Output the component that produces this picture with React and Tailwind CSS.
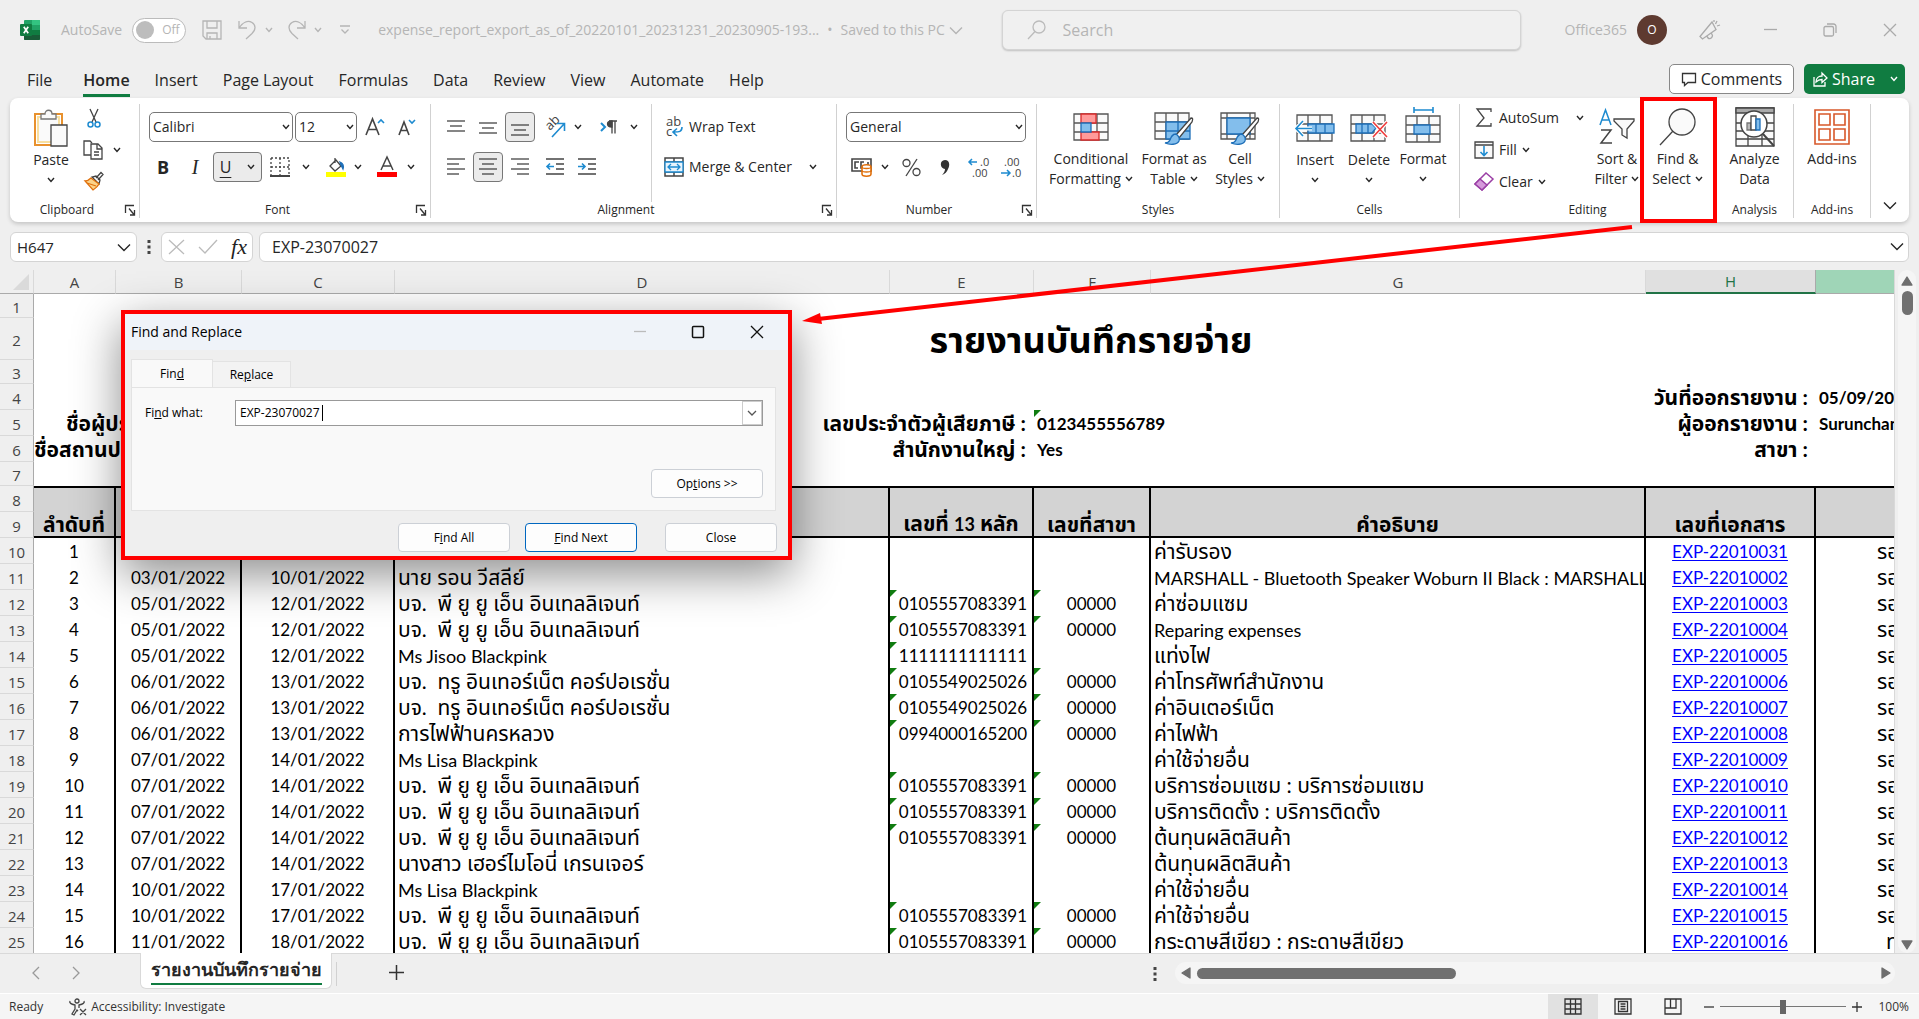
import React, { useState } from "react";

const UI = "font-['Open_Sans','Noto_Sans',sans-serif]";

const TABS = ["File", "Home", "Insert", "Page Layout", "Formulas", "Data", "Review", "View", "Automate", "Help"];

const PUN = "บจ.  พี ยู ยู เอ็น อินเทลลิเจนท์";
const TRUE_CORP = "บจ.  ทรู อินเทอร์เน็ต คอร์ปอเรชั่น";

const ROWS = [
  ["01/01/2022", "08/01/2022", "", "", "", "ค่ารับรอง", "EXP-22010031"],
  ["03/01/2022", "10/01/2022", "นาย รอน วีสลีย์", "", "", "MARSHALL - Bluetooth Speaker Woburn II Black : MARSHALL", "EXP-22010002"],
  ["05/01/2022", "12/01/2022", PUN, "0105557083391", "00000", "ค่าซ่อมแซม", "EXP-22010003"],
  ["05/01/2022", "12/01/2022", PUN, "0105557083391", "00000", "Reparing expenses", "EXP-22010004"],
  ["05/01/2022", "12/01/2022", "Ms Jisoo Blackpink", "1111111111111", "", "แท่งไฟ", "EXP-22010005"],
  ["06/01/2022", "13/01/2022", TRUE_CORP, "0105549025026", "00000", "ค่าโทรศัพท์สำนักงาน", "EXP-22010006"],
  ["06/01/2022", "13/01/2022", TRUE_CORP, "0105549025026", "00000", "ค่าอินเตอร์เน็ต", "EXP-22010007"],
  ["06/01/2022", "13/01/2022", "การไฟฟ้านครหลวง", "0994000165200", "00000", "ค่าไฟฟ้า", "EXP-22010008"],
  ["07/01/2022", "14/01/2022", "Ms Lisa Blackpink", "", "", "ค่าใช้จ่ายอื่น", "EXP-22010009"],
  ["07/01/2022", "14/01/2022", PUN, "0105557083391", "00000", "บริการซ่อมแซม : บริการซ่อมแซม", "EXP-22010010"],
  ["07/01/2022", "14/01/2022", PUN, "0105557083391", "00000", "บริการติดตั้ง : บริการติดตั้ง", "EXP-22010011"],
  ["07/01/2022", "14/01/2022", PUN, "0105557083391", "00000", "ต้นทุนผลิตสินค้า", "EXP-22010012"],
  ["07/01/2022", "14/01/2022", "นางสาว เฮอร์ไมโอนี่ เกรนเจอร์", "", "", "ต้นทุนผลิตสินค้า", "EXP-22010013"],
  ["10/01/2022", "17/01/2022", "Ms Lisa Blackpink", "", "", "ค่าใช้จ่ายอื่น", "EXP-22010014"],
  ["10/01/2022", "17/01/2022", PUN, "0105557083391", "00000", "ค่าใช้จ่ายอื่น", "EXP-22010015"],
  ["11/01/2022", "18/01/2022", PUN, "0105557083391", "00000", "กระดาษสีเขียว : กระดาษสีเขียว", "EXP-22010016"],
];

const Svg = ({ w, h, children, className = "" }) => (
  <svg
    width={w}
    height={h}
    viewBox={`0 0 ${w} ${h}`}
    fill="none"
    stroke="#444"
    strokeWidth="1.3"
    aria-hidden="true"
    className={`shrink-0 overflow-visible ${className}`}
  >
    {children}
  </svg>
);

const Chevron = ({ className = "", big = false }) =>
  big ? (
    <Svg w={14} h={9} className={className}>
      <path d="M1 1.5 7 7.5 13 1.5" stroke="currentColor" strokeWidth="1.4" />
    </Svg>
  ) : (
    <Svg w={8} h={6} className={className}>
      <path d="M1 1 4 4.4 7 1" stroke="currentColor" strokeWidth="1.4" />
    </Svg>
  );

const Group = ({ label, launcher, className = "", children }) => (
  <section className={`flex flex-col border-r border-[#d1d1d1] ${className}`} aria-label={label}>
    <div className="flex h-24 flex-1">{children}</div>
    <footer className="flex h-4 items-center text-xs leading-4">
      <span className="flex-1 text-center">{label}</span>
      {launcher && (
        <button aria-label={`${label} settings`} className="mr-[3px]">
          <Svg w={12} h={12}>
            <path d="M1.5 9V1.5H10M5 4.5l5 6M10.5 6v5H6" stroke="#333" />
          </Svg>
        </button>
      )}
    </footer>
  </section>
);

const Tool = ({ label, className = "w-7", active, children }) => (
  <button
    aria-label={label}
    className={`flex h-[30px] shrink-0 items-center justify-center rounded ${
      active ? "border border-[#777] bg-[#ebebeb]" : ""
    } ${className}`}
  >
    {children}
  </button>
);

const Rule = () => <span className="h-[30px] w-px shrink-0 bg-[#d1d1d1]" />;

// Tall ribbon button: drawing on top, one or two lines of caption below
const BigTool = ({ icon, lines, arrow, className = "" }) => (
  <button className={`flex shrink-0 flex-col items-center text-sm leading-5 ${className}`}>
    <span className="flex h-[45px] items-center justify-center">{icon}</span>
    <span>{lines[0]}</span>
    <span className="flex h-5 items-center justify-center gap-1">
      {lines[1]}
      {arrow && <Chevron />}
    </span>
  </button>
);

const Picker = ({ label, value, className }) => (
  <div className={`relative shrink-0 ${className}`}>
    <select
      aria-label={label}
      className="h-[30px] w-full appearance-none rounded-[5px] border border-[#777] bg-white pl-[3px] text-sm"
    >
      <option>{value}</option>
    </select>
    <Chevron className="pointer-events-none absolute right-[3px] top-3" />
  </div>
);

const Lines = ({ ys, xs }) => (
  <Svg w={18} h={18}>
    {ys.map((y, i) => (
      <path key={y} d={`M${xs[i][0]} ${y}H${xs[i][1]}`} />
    ))}
  </Svg>
);

const TitleBar = () => (
  <header className="flex h-[60px] shrink-0 items-center pl-5 text-sm text-[#b5b5b5]">
    <Svg w={20} h={20}>
      <g stroke="none">
        <rect x="4" width="16" height="20" rx="1" fill="#21a366" />
        <path d="M12 0h7a1 1 0 0 1 1 1v4h-8z" fill="#33c481" />
        <path d="M4 5h8v5H4z" fill="#107c41" />
        <path d="M12 10h8v5h-8zM4 10h8v5H4z" fill="#185c37" />
        <path d="M12 10h8v5h-8z" fill="#107c41" />
        <path d="M4 15h16v4a1 1 0 0 1-1 1H5a1 1 0 0 1-1-1z" fill="#185c37" />
        <rect y="4" width="12" height="12" rx="1" fill="#107c41" />
      </g>
      <path d="M3.8 6.8 8.2 13.2M8.2 6.8 3.8 13.2" stroke="#fff" strokeWidth="1.7" />
    </Svg>
    <span className="ml-[21px]">AutoSave</span>
    <button
      role="switch"
      aria-checked="false"
      aria-label="AutoSave"
      className="ml-[10px] flex h-[25px] w-[54px] items-center gap-2 rounded-full border border-[#bbb] bg-white pl-[3px] text-xs"
    >
      <span className="size-[18px] rounded-full bg-[#bdbdbd]" />
      Off
    </button>
    <button aria-label="Save" className="ml-4">
      <Svg w={20} h={20}>
        <path d="M1 1h18v18H4l-3-3zM5 1v7h10V1M5 19v-6h10v6M8 19v-3" stroke="#b5b5b5" />
      </Svg>
    </button>
    <button aria-label="Undo" className="ml-4 flex items-center gap-2">
      <Svg w={19} h={20}>
        <path d="M1 1v7h8M1 8C5 2 10 0 14 2.500s4 7 0 11L8 19" stroke="#b5b5b5" />
      </Svg>
      <Chevron />
    </button>
    <button aria-label="Redo" className="ml-[14px] flex items-center gap-2">
      <Svg w={19} h={20}>
        <path d="M18 1v7h-8M18 8C14 2 9 0 5 2.500s-4 7 0 11L11 19" stroke="#b5b5b5" />
      </Svg>
      <Chevron />
    </button>
    <button aria-label="Customize toolbar" className="ml-[18px]">
      <Svg w={10} h={10}>
        <path d="M0 1h10M1.500 4.500 5 8 8.500 4.500" stroke="#b5b5b5" />
      </Svg>
    </button>
    <span className="ml-[28px]">expense_report_export_as_of_20220101_20231231_20230905-193...</span>
    <span className="ml-2">•</span>
    <button className="ml-2 flex items-center gap-1">
      Saved to this PC
      <Chevron big />
    </button>
    <label className="ml-auto flex h-10 w-[519px] items-center gap-4 rounded-md border border-[#d4d4d4] bg-[#f0f0f0] pl-6 shadow-[0_1px_2px_rgba(0,0,0,0.2)]">
      <Svg w={20} h={20}>
        <circle cx="12" cy="7" r="6" stroke="#bbb" />
        <path d="M8 11.500 1 19" stroke="#bbb" />
      </Svg>
      <input aria-label="Search" placeholder="Search" className="w-80 text-base outline-none placeholder:text-[#b5b5b5]" />
    </label>
    <span className="ml-11">Office365</span>
    <span className="ml-[10px] flex size-[30px] items-center justify-center rounded-full bg-[#5e3a30] text-xs text-white">O</span>
    <button aria-label="Coming soon" className="ml-8">
      <Svg w={22} h={22}>
        <path d="M13 3 1 17.500l2.500 2.500 13.500-9.500zM8 17c1 4 5 3 5.500-.500l-1-2M15 1v2M18 2l-1.500 3M21 6l-3 1" stroke="#aaa" />
      </Svg>
    </button>
    <button aria-label="Minimize" className="ml-[43px]">
      <Svg w={14} h={14}>
        <path d="M0 6.500h13" stroke="#aaa" />
      </Svg>
    </button>
    <button aria-label="Restore" className="ml-[45px]">
      <Svg w={14} h={14}>
        <rect x="1" y="3.500" width="9.500" height="9.500" rx="1.500" stroke="#aaa" />
        <path d="M4 1h6.500a2.500 2.500 0 0 1 2.500 2.500V10" stroke="#aaa" />
      </Svg>
    </button>
    <button aria-label="Close window" className="ml-[46px] mr-[22px]">
      <Svg w={14} h={14}>
        <path d="m1 1 12 12M13 1 1 13" stroke="#aaa" />
      </Svg>
    </button>
  </header>
);

const MenuBar = () => (
  <nav className="flex h-[38px] shrink-0 items-center gap-[25px] pl-[27px] pr-[14px] text-base">
    {TABS.map((tab) =>
      tab === "Home" ? (
        <a key={tab} href="#home" className="ml-[6px] mt-1 border-b-[3px] border-[#107c41] font-semibold leading-7">
          {tab}
        </a>
      ) : (
        <a key={tab} href={`#${tab.toLowerCase().replace(" ", "-")}`} className="mt-px leading-7">
          {tab}
        </a>
      )
    )}
    <div className="ml-auto flex gap-[10px]">
      <button className="flex h-[30px] w-[125px] items-center justify-center gap-1 rounded-[5px] border border-[#888] bg-white">
        <Svg w={16} h={15}>
          <path d="M1.500 1.500h13v9H7l-3.500 3v-3h-2z" stroke="#333" />
        </Svg>
        Comments
      </button>
      <button className="flex h-[30px] w-[101px] items-center rounded-[5px] bg-[#107c41] pl-2 text-white">
        <Svg w={16} h={16}>
          <path d="M2 6v9h11v-4M4 11c0-4 3-6 6-6V2l5 5-5 4.500V8.500C8 8.500 6 9 4 11z" stroke="#fff" />
        </Svg>
        <span className="ml-1 font-medium">Share</span>
        <Chevron className="ml-auto mr-[7px]" />
      </button>
    </div>
  </nav>
);

const GridBase = ({ x = 1, y = 1, w = 34, h = 26 }) => (
  <path
    d={`M${x} ${y}h${w}v${h}h-${w}zM${x} ${y + 9}h${w}M${x} ${y + 18}h${w}M${x + 11} ${y}v${h}M${x + 23} ${y}v${h}`}
    fill="#fafafa"
    stroke="#555"
  />
);

const Brush = () => (
  <g>
    <path d="M37 9 22 26l3 3L38 13c1-3 1-4-1-4z" fill="#fff" stroke="#444" />
    <path d="M22 25c-4 0-5 3-6 6-1 2-3 3-5 3 5 2 12 2 14-2 1-3 0-5-3-7z" fill="#83beec" stroke="#1e6fb8" />
  </g>
);

const Ribbon = () => (
  <div className="mx-[10px] flex h-[124px] shrink-0 rounded-lg bg-white pb-1 pt-[6px] text-sm shadow-[0_2px_4px_rgba(0,0,0,0.18)]">
    <Group label="Clipboard" launcher className="w-[130px]">
      <BigTool
        className="ml-5 w-[42px] pt-px"
        lines={["Paste"]}
        arrow
        icon={
          <Svg w={36} h={40}>
            <path d="M2 6h27v31H2z" fill="#fff" stroke="#e8912d" strokeWidth="2" />
            <path d="M5 9h21v25H5z" fill="#fafafa" stroke="#f8dfa0" strokeWidth="2" />
            <path d="M8 11V6h4c0-5 7-5 7 0h4v5z" fill="#fafafa" stroke="#777" />
            <path d="M18 17h16v21H18z" fill="#fafafa" stroke="#444" />
          </Svg>
        }
      />
      <div className="ml-3 flex flex-col gap-px">
        <Tool label="Cut" className="w-5">
          <Svg w={14} h={20}>
            <path d="M3 0l6 13M11 0 5 13" />
            <circle cx="3.500" cy="15.500" r="2.500" stroke="#1e8bd0" strokeWidth="1.500" />
            <circle cx="10.500" cy="15.500" r="2.500" stroke="#1e8bd0" strokeWidth="1.500" />
          </Svg>
        </Tool>
        <Tool label="Copy" className="gap-[10px] pl-2 w-7">
          <Svg w={20} h={20}>
            <path d="M8 15H1V1h6l2 2" />
            <path d="M8 4h7l4 4v11H8zM14 4v5h5M11 12h5M11 15h5" fill="#fff" />
          </Svg>
          <Chevron />
        </Tool>
        <Tool label="Format Painter" className="w-5">
          <Svg w={20} h={20}>
            <path d="M12 7l5-5.500 2 2L14 9M8 6l7 7 1-4-4-4z" fill="#fff" />
            <path d="M7 7C5 9 3 10 1 10l8 9c3-2 5-4 6-6z" fill="#fbd38a" stroke="#e0700c" />
            <path d="M3 12l9 3" stroke="#e0700c" />
          </Svg>
        </Tool>
      </div>
    </Group>

    <Group label="Font" launcher className="w-[291px]">
      <div className="flex flex-col gap-[10px] pl-[9px] pt-2">
        <div className="flex items-center">
          <Picker label="Font name" value="Calibri" className="w-[144px]" />
          <Picker label="Font size" value="12" className="ml-[2px] w-[62px]" />
          <Tool label="Increase font size" className="ml-[6px] w-6">
            <Svg w={20} h={20}>
              <path d="M1 18 7.500 2 14 18M3 12.500h9" strokeWidth="1.600" />
              <path d="m13 6 3-3 3 3" stroke="#1e8bd0" strokeWidth="1.600" />
            </Svg>
          </Tool>
          <Tool label="Decrease font size" className="ml-2 w-6">
            <Svg w={18} h={20}>
              <path d="M1 18 6 5l5 13M3 13.500h7" strokeWidth="1.600" />
              <path d="m11 3 3 3 3-3" stroke="#1e8bd0" strokeWidth="1.600" />
            </Svg>
          </Tool>
        </div>
        <div className="flex items-center">
          <Tool label="Bold">
            <b className="text-lg">B</b>
          </Tool>
          <Tool label="Italic" className="ml-1 w-7">
            <i className="font-['Liberation_Serif',serif] text-xl">I</i>
          </Tool>
          <Tool label="Underline" active className="ml-1 w-[49px] gap-4">
            <span className="text-base underline underline-offset-4">U</span>
            <Chevron />
          </Tool>
          <span className="ml-[2px]">
            <Rule />
          </span>
          <Tool label="Borders" className="ml-[6px] w-10 gap-3">
            <Svg w={20} h={20}>
              <path d="M1 1h18v18M1 1v18M10 1v18M1 10h18" strokeDasharray="2 2" />
              <path d="M0 19h20" strokeWidth="2" />
            </Svg>
            <Chevron />
          </Tool>
          <span className="ml-[7px]">
            <Rule />
          </span>
          <Tool label="Fill Color" className="ml-[7px] w-10 gap-2">
            <Svg w={20} h={20}>
              <path d="M9 1v5M4 9l6-6 5 6-6 5z" />
              <path d="M14 5c3 1 4 4 3 7l-2-4z" fill="#1e6fb8" stroke="#1e6fb8" />
              <path d="M0 17.500h20" stroke="#ffff00" strokeWidth="5" />
            </Svg>
            <Chevron />
          </Tool>
          <Tool label="Font Color" className="ml-3 w-10 gap-[10px]">
            <Svg w={20} h={20}>
              <path d="M4 13 10 0l6 13M6 9h8" strokeWidth="1.500" />
              <path d="M0 17.500h20" stroke="#ff0000" strokeWidth="5" />
            </Svg>
            <Chevron />
          </Tool>
        </div>
      </div>
    </Group>

    <Group label="Alignment" launcher className="w-[406px]">
      <div className="flex flex-col gap-[10px] pl-[11px] pt-2">
        <div className="flex items-center">
          <Tool label="Top Align">
            <Lines ys={[3, 8, 13]} xs={[[0, 18], [3, 15], [0, 18]]} />
          </Tool>
          <Tool label="Middle Align" className="ml-1 w-7">
            <Lines ys={[5, 10, 15]} xs={[[0, 18], [3, 15], [0, 18]]} />
          </Tool>
          <Tool label="Bottom Align" active className="ml-[3px] w-[30px]">
            <Lines ys={[7, 12, 17]} xs={[[0, 18], [3, 15], [0, 18]]} />
          </Tool>
          <span className="ml-[2px]">
            <Rule />
          </span>
          <Tool label="Orientation" className="ml-1 w-11 gap-2">
            <Svg w={22} h={22}>
              <text transform="translate(6 15) rotate(-45)" fontSize="13" fill="#444" stroke="none">
                ab
              </text>
              <path d="M8 21 20 8M13 7.500h7.500V15" stroke="#1e8bd0" strokeWidth="1.600" />
            </Svg>
            <Chevron />
          </Tool>
          <span className="ml-[6px]">
            <Rule />
          </span>
          <Tool label="Text direction" className="ml-2 w-10 gap-3">
            <Svg w={18} h={16}>
              <path d="m1 4 4 4-4 4" stroke="#1e8bd0" strokeWidth="2" />
              <path d="M12 2.500v12M15 2.500v12M9 2h8" />
              <path d="M12 2c-6 0-6 6 0 6z" fill="#444" />
            </Svg>
            <Chevron />
          </Tool>
        </div>
        <div className="flex items-center">
          <Tool label="Align Left">
            <Lines ys={[1, 6, 11, 16]} xs={[[0, 18], [0, 12], [0, 18], [0, 12]]} />
          </Tool>
          <Tool label="Center" active className="ml-[3px] w-[30px]">
            <Lines ys={[1, 6, 11, 16]} xs={[[0, 18], [3, 15], [0, 18], [3, 15]]} />
          </Tool>
          <Tool label="Align Right" className="ml-[3px] w-7">
            <Lines ys={[1, 6, 11, 16]} xs={[[0, 18], [6, 18], [0, 18], [6, 18]]} />
          </Tool>
          <span className="ml-[3px]">
            <Rule />
          </span>
          <Tool label="Decrease Indent" className="ml-1 w-7">
            <Svg w={18} h={18}>
              <path d="M0 1h18M10 6h8M10 11h8M0 16h18" />
              <path d="M8 8.500H1M4 5.500l-3 3 3 3" stroke="#1e8bd0" strokeWidth="1.600" />
            </Svg>
          </Tool>
          <Tool label="Increase Indent" className="ml-1 w-7">
            <Svg w={18} h={18}>
              <path d="M0 1h18M10 6h8M10 11h8M0 16h18" />
              <path d="M0 8.500h7M4 5.500l3 3-3 3" stroke="#1e8bd0" strokeWidth="1.600" />
            </Svg>
          </Tool>
        </div>
      </div>
      <div className="ml-auto flex w-[185px] flex-col gap-[10px] border-l border-[#d1d1d1] pl-3 pt-2">
        <button className="flex h-[30px] items-center gap-[5px]">
          <Svg w={20} h={22}>
            <g fill="#444" stroke="none" fontSize="13">
              <text x="2" y="10">ab</text>
              <text x="2" y="20">c</text>
            </g>
            <path d="M18 11c0 5-3 5-8 5M13 12.500l-4 3.500 4 4" stroke="#1e8bd0" strokeWidth="1.600" />
          </Svg>
          Wrap Text
        </button>
        <button className="flex h-[30px] items-center gap-[5px]">
          <Svg w={20} h={20}>
            <path d="M1 1h18v18H1zM1 5h18M1 15h18M10 1v4M10 15v4" strokeWidth="1.500" />
            <path d="M1 5h18v10H1z" fill="#e9f4fc" stroke="#1e8bd0" />
            <path d="M4 10h12M7 7l-3 3 3 3M13 7l3 3-3 3" stroke="#1e8bd0" />
          </Svg>
          Merge &amp; Center
          <Chevron className="ml-3" />
        </button>
      </div>
    </Group>

    <Group label="Number" launcher className="w-[200px]">
      <div className="flex flex-col gap-[10px] pl-[9px] pt-2">
        <Picker label="Number format" value="General" className="w-[180px]" />
        <div className="flex items-center">
          <Tool label="Accounting Number Format" className="w-12 gap-2">
            <Svg w={22} h={20}>
              <path d="M1 2h19v12H1zM8 5H4v6h3M13 5h-3v6h2M17 5v3" strokeWidth="1.600" />
              <path d="M11 10c0-3 9-3 9 0v7c0 3-9 3-9 0z" fill="#fff" stroke="#e0700c" strokeWidth="1.600" />
              <path d="M11 10c0 2 9 2 9 0M11 13.500c0 2 9 2 9 0" stroke="#e0700c" />
            </Svg>
            <Chevron />
          </Tool>
          <Tool label="Percent Style" className="ml-px w-8">
            <Svg w={19} h={19}>
              <circle cx="4.500" cy="5" r="3.500" />
              <circle cx="14.500" cy="14" r="3.500" />
              <path d="M15 1 4 18" />
            </Svg>
          </Tool>
          <Tool label="Comma Style" className="ml-[6px] w-6">
            <Svg w={10} h={17}>
              <path d="M5 1c5 0 5 6 3 9-1 3-3 5-6 6 2-2 3-4 3-6-5 0-6-9 0-9z" fill="#333" stroke="none" />
            </Svg>
          </Tool>
          <span className="ml-1">
            <Rule />
          </span>
          <Tool label="Increase Decimal" className="ml-1 w-7">
            <Svg w={22} h={22}>
              <g fill="#444" stroke="none" fontSize="11">
                <text x="12" y="10">.0</text>
                <text x="4" y="21">.00</text>
              </g>
              <path d="M9 6H1M4 3 1 6l3 3" stroke="#1e8bd0" strokeWidth="1.500" />
            </Svg>
          </Tool>
          <Tool label="Decrease Decimal" className="ml-1 w-7">
            <Svg w={22} h={22}>
              <g fill="#444" stroke="none" fontSize="11">
                <text x="4" y="10">.00</text>
                <text x="12" y="21">.0</text>
              </g>
              <path d="M1 17h9M7 14l3 3-3 3" stroke="#1e8bd0" strokeWidth="1.500" />
            </Svg>
          </Tool>
        </div>
      </div>
    </Group>

    <Group label="Styles" className="w-[243px]">
      <BigTool
        className="ml-2 w-[92px]"
        lines={["Conditional", "Formatting"]}
        arrow
        icon={
          <Svg w={36} h={28}>
            <GridBase />
            <path d="M8 1h15v9H8zM8 19h18v8H8z" fill="#ff9a9a" stroke="#d92b2b" />
            <path d="M8 10h10v9H8z" fill="#83beec" stroke="#1e6fb8" />
          </Svg>
        }
      />
      <BigTool
        className="w-[74px]"
        lines={["Format as", "Table"]}
        arrow
        icon={
          <Svg w={40} h={36}>
            <GridBase x={1} y={4} />
            <path d="M12 13h24v17H12z" fill="#83beec" stroke="#1e6fb8" />
            <path d="M24 13v17M12 22h24" stroke="#1e6fb8" />
            <Brush />
          </Svg>
        }
      />
      <BigTool
        className="w-[58px]"
        lines={["Cell", "Styles"]}
        arrow
        icon={
          <Svg w={40} h={36}>
            <path d="M1 4h34v26H1zM1 9h34M1 25h34M7 4v26M30 4v26" fill="#fafafa" stroke="#555" />
            <path d="M7 9h23v16H7z" fill="#83beec" stroke="#1e6fb8" />
            <Brush />
          </Svg>
        }
      />
    </Group>

    <Group label="Cells" className="w-[180px]">
      <BigTool
        className="ml-2 w-[54px] pt-px"
        lines={["Insert"]}
        arrow
        icon={
          <Svg w={42} h={30}>
            <GridBase x={3} y={2} w={35} />
            <path d="M14 11h26v9H14zM22 11v9M31 11v9" fill="#83beec" stroke="#1e6fb8" />
            <path d="M18 15.500H2M9 8l-7 7.500L9 23" stroke="#fff" strokeWidth="4" />
            <path d="M18 15.500H2M9 8l-7 7.500L9 23" stroke="#1e8bd0" strokeWidth="1.600" />
          </Svg>
        }
      />
      <BigTool
        className="w-[54px] pt-px"
        lines={["Delete"]}
        arrow
        icon={
          <Svg w={38} h={30}>
            <GridBase x={1} y={2} />
            <path d="M6 11h16l4 4-4 5H6zM12 11v9M18 11v9" fill="#83beec" stroke="#1e6fb8" />
            <path d="m23 9 14 15M37 9 23 24" stroke="#fff" strokeWidth="4" />
            <path d="m23 9 14 15M37 9 23 24" stroke="#f03a3a" strokeWidth="1.600" />
          </Svg>
        }
      />
      <BigTool
        className="w-[54px]"
        lines={["Format"]}
        arrow
        icon={
          <Svg w={36} h={40}>
            <GridBase x={1} y={9} />
            <path d="M9 18h16v9H9z" fill="#83beec" stroke="#1e6fb8" />
            <path d="M9 3h19M9 0v6M28 0v6" stroke="#1e8bd0" strokeWidth="1.600" />
          </Svg>
        }
      />
    </Group>

    <Group label="Editing" className="w-[256px]">
      <div className="flex w-[134px] flex-col gap-1 pl-[14px]">
        <button className="flex h-7 items-center">
          <Svg w={20} h={20}>
            <path d="M17 4V1H3l7 9-7 8h14v-3" />
          </Svg>
          <span className="ml-[5px]">AutoSum</span>
          <Chevron className="ml-auto mr-[10px]" />
        </button>
        <button className="flex h-7 items-center gap-[5px]">
          <Svg w={20} h={18}>
            <path d="M1 1h18v16H1zM1 4h18" fill="#fafafa" />
            <path d="M10 5v9M6.500 11l3.500 3.500 3.500-3.500" stroke="#1e8bd0" strokeWidth="1.600" />
          </Svg>
          Fill
          <Chevron />
        </button>
        <button className="flex h-7 items-center gap-[5px]">
          <Svg w={20} h={20}>
            <path d="M1 12 12 1l7 6L8 18z" fill="#fff" stroke="#9b3fa5" strokeWidth="1.500" />
            <path d="m1 12 5-5 7 6-5 5z" fill="#d59adb" stroke="#9b3fa5" strokeWidth="1.500" />
          </Svg>
          Clear
          <Chevron />
        </button>
      </div>
      <BigTool
        className="w-[46px] whitespace-nowrap"
        lines={["Sort &", "Filter"]}
        arrow
        icon={
          <Svg w={36} h={36}>
            <path d="M1 16 6.500 1 12 16M3 11h7" stroke="#1e8bd0" strokeWidth="1.500" />
            <path d="M2 21h10L2 34h11" strokeWidth="1.500" />
            <path d="M15 10h20v2l-7 8v9l-5-3v-6l-8-8z" fill="#fafafa" />
          </Svg>
        }
      />
      <div className="relative w-[75px]">
        <BigTool
          className="w-full"
          lines={["Find &", "Select"]}
          arrow
          icon={
            <Svg w={38} h={40}>
              <circle cx="23" cy="15" r="13" fill="#fafafa" />
              <path d="M14 24 1 38" />
            </Svg>
          }
        />
        <span className="pointer-events-none absolute -top-[7px] left-0 h-[126px] w-[77px] border-4 border-[#ff0000]" />
      </div>
    </Group>

    <Group label="Analysis" className="w-[78px]">
      <BigTool
        className="w-full"
        lines={["Analyze", "Data"]}
        icon={
          <Svg w={40} h={40}>
            <path d="M1 1h38v38H1zM1 16h38M1 24h38M1 32h38M13 24v15M27 24v15" fill="#fafafa" />
            <path d="M1 1h38v5H1z" fill="#aaa" />
            <circle cx="19" cy="17" r="13" fill="#fff" strokeWidth="1.500" />
            <path d="M12 16h4v7h-4z" fill="#bbb" stroke="#777" />
            <path d="M16 9h5v14h-5z" fill="#fff" />
            <path d="M21 12h4v11h-4z" fill="#83beec" stroke="#1e6fb8" />
            <path d="m28 27 11 12" strokeWidth="2" />
          </Svg>
        }
      />
    </Group>

    <Group label="Add-ins" className="w-[77px]">
      <BigTool
        className="w-full"
        lines={["Add-ins"]}
        icon={
          <Svg w={36} h={36}>
            <path d="M1 1h34v34H1zM5 5h11v11H5zM20 5h11v11H20zM5 20h11v11H5zM20 20h11v11H20z" fill="#fff" stroke="#d8582a" strokeWidth="1.600" />
          </Svg>
        }
      />
    </Group>
    <button aria-label="Collapse ribbon" className="ml-auto mr-3 self-end pb-2">
      <Chevron big />
    </button>
  </div>
);

const FormulaBar = () => (
  <div className="mt-[10px] flex h-[30px] shrink-0 items-center px-[10px]">
    <div className="relative w-[127px]">
      <input
        aria-label="Name box"
        defaultValue="H647"
        className="h-[30px] w-full rounded-md border border-[#d4d4d4] bg-white pl-[6px] text-[15px] outline-none"
      />
      <Chevron big className="absolute right-[6px] top-[11px]" />
    </div>
    <Svg w={4} h={14} className="ml-[10px]">
      <path d="M2 0v14" stroke="#444" strokeWidth="3" strokeDasharray="3 2.500" />
    </Svg>
    <div className="ml-[10px] flex h-[30px] w-[92px] items-center justify-between rounded-md border border-[#d4d4d4] bg-white pl-[6px] pr-[5px]">
      <button aria-label="Cancel">
        <Svg w={17} h={16}>
          <path d="m1 1 15 14M16 1 1 15" stroke="#bbb" />
        </Svg>
      </button>
      <button aria-label="Enter">
        <Svg w={20} h={16}>
          <path d="m1 8 6 6L19 1" stroke="#bbb" />
        </Svg>
      </button>
      <button aria-label="Insert Function" className="font-['Liberation_Serif',serif] text-[22px] italic leading-6 text-[#222]">
        fx
      </button>
    </div>
    <div className="relative ml-[6px] flex-1">
      <input
        aria-label="Formula bar"
        defaultValue="EXP-23070027"
        className="h-[30px] w-full rounded-md border border-[#d4d4d4] bg-white pl-3 text-base outline-none"
      />
      <Chevron big className="absolute right-[5px] top-[10px]" />
    </div>
  </div>
);

const RowNum = ({ n }) => (
  <th
    scope="row"
    className={`border-b border-r border-b-[#d9d9d9] border-r-[#aaa] bg-[#efefef] p-0 pt-[2px] text-center align-middle text-[15px] font-normal leading-5 text-[#444] ${UI}`}
  >
    {n}
  </th>
);

const Flag = () => (
  <span className="absolute left-0 top-0 border-r-[7px] border-t-[7px] border-r-transparent border-t-[#107c10]" />
);

const CELL = "relative overflow-hidden border-r-2 border-black p-0 whitespace-pre";
const NUM = `${CELL} pt-[2px]`;
const HEAD = "border-y-2 border-r-2 border-black bg-[#d3d3d3] p-0 align-bottom text-[21px] font-bold";
const INFO = "relative overflow-hidden p-0 font-bold";
const LABEL = `${INFO} text-[21px]`;
const VALUE = `${INFO} pl-[3px] pt-[2px]`;

// Thai glyphs run smaller than Latin ones at the same size
const textSize = (text) => (/[\u0E00-\u0E7F]/.test(text) ? "text-[21px]" : "pt-[2px] text-[18px]");

const Sheet = () => (
  <div className="flex-1 overflow-hidden bg-white">
    <table className="w-full table-fixed border-separate border-spacing-0 whitespace-nowrap font-['Lato','Noto_Sans_Thai','Noto_Sans',sans-serif] text-[17px] leading-[24px] text-black">
      <colgroup>
        <col className="w-[34px]" />
        <col className="w-[82px]" />
        <col className="w-[126px]" />
        <col className="w-[153px]" />
        <col className="w-[495px]" />
        <col className="w-[144px]" />
        <col className="w-[117px]" />
        <col className="w-[495px]" />
        <col className="w-[170px]" />
        <col />
      </colgroup>
      <thead>
        <tr className={`h-6 bg-[#efefef] text-[15px] text-[#444] ${UI}`}>
          <th className="border-b border-r border-b-[#aaa] border-r-[#d9d9d9] p-0">
            <Svg w={16} h={16} className="ml-auto mr-1">
              <path d="M16 0v16H0z" fill="#dadada" stroke="none" />
            </Svg>
          </th>
          {["A", "B", "C", "D", "E", "F", "G"].map((c) => (
            <th key={c} scope="col" className="border-b border-r border-b-[#aaa] border-r-[#d9d9d9] p-0 font-normal leading-5">
              {c}
            </th>
          ))}
          <th scope="col" className="border-b-2 border-r border-b-[#217346] border-r-[#aaa] bg-[#e0e0e0] p-0 font-normal leading-5 text-[#217346]">
            H
          </th>
          <th className="border-b border-[#aaa] bg-[#9fd5b7] p-0" />
        </tr>
      </thead>
      <tbody>
        <tr className="h-6">
          <RowNum n={1} />
          <td colSpan={9} className="p-0" />
        </tr>
        <tr className="h-[42px]">
          <RowNum n={2} />
          <td colSpan={9} className="p-0 pl-[254px] text-center text-[36px] font-bold leading-10">
            รายงานบันทึกรายจ่าย
          </td>
        </tr>
        <tr className="h-6">
          <RowNum n={3} />
          <td colSpan={9} className="p-0" />
        </tr>
        <tr className="h-[26px]">
          <RowNum n={4} />
          <td colSpan={7} className="p-0" />
          <td className={`${LABEL} pr-2 text-right`}>วันที่ออกรายงาน :</td>
          <td className={VALUE}>05/09/2023</td>
        </tr>
        <tr className="h-[26px]">
          <RowNum n={5} />
          <td colSpan={3} className={`${LABEL} pl-8`}>ชื่อผู้ประกอบการ :</td>
          <td colSpan={2} className={`${LABEL} pr-2 text-right`}>เลขประจำตัวผู้เสียภาษี :</td>
          <td colSpan={2} className={VALUE}>
            <Flag />
            0123455556789
          </td>
          <td className={`${LABEL} pr-2 text-right`}>ผู้ออกรายงาน :</td>
          <td className={VALUE}>Surunchana</td>
        </tr>
        <tr className="h-[26px]">
          <RowNum n={6} />
          <td colSpan={3} className={LABEL}>ชื่อสถานประกอบการ :</td>
          <td colSpan={2} className={`${LABEL} pr-2 text-right`}>สำนักงานใหญ่ :</td>
          <td colSpan={2} className={VALUE}>Yes</td>
          <td className={`${LABEL} pr-2 text-right`}>สาขา :</td>
          <td className={INFO} />
        </tr>
        <tr className="h-6">
          <RowNum n={7} />
          <td colSpan={9} className="p-0" />
        </tr>
        <tr className="h-[26px]">
          <RowNum n={8} />
          <th rowSpan={2} className={HEAD}>ลำดับที่</th>
          <th rowSpan={2} className={HEAD}>วันที่</th>
          <th rowSpan={2} className={HEAD}>วันครบกำหนด</th>
          <th rowSpan={2} className={HEAD}>ชื่อผู้ขาย</th>
          <th rowSpan={2} className={HEAD}>
            เลขที่ <span className="text-[18px]">13</span> หลัก
          </th>
          <th rowSpan={2} className={HEAD}>เลขที่สาขา</th>
          <th rowSpan={2} className={HEAD}>คำอธิบาย</th>
          <th rowSpan={2} className={HEAD}>เลขที่เอกสาร</th>
          <th rowSpan={2} className="border-y-2 border-black bg-[#d3d3d3] p-0" />
        </tr>
        <tr className="h-[26px]">
          <RowNum n={9} />
        </tr>
        {ROWS.map(([issued, due, vendor, taxId, branch, detail, doc], i) => (
          <tr key={doc} className="h-[26px]">
            <RowNum n={i + 10} />
            <td className={`${NUM} text-center`}>{i + 1}</td>
            <td className={`${NUM} text-center`}>{issued}</td>
            <td className={`${NUM} text-center`}>{due}</td>
            <td className={`${CELL} pl-[3px] ${textSize(vendor)}`}>{vendor}</td>
            <td className={`${NUM} pr-[5px] text-right`}>
              {taxId && <Flag />}
              {taxId}
            </td>
            <td className={`${NUM} text-center`}>
              {branch && <Flag />}
              {branch}
            </td>
            <td className={`${CELL} pl-[3px] ${textSize(detail)}`}>{detail}</td>
            <td className={`${NUM} text-center`}>
              <a href={`#${doc}`} className="text-[#0000ff] underline underline-offset-2">
                {doc}
              </a>
            </td>
            <td className={`overflow-hidden p-0 text-[21px] ${i === 15 ? "pl-[70px]" : "pl-[61px]"}`}>
              {i === 15 ? "ท" : "รอ"}
            </td>
          </tr>
        ))}
      </tbody>
    </table>
  </div>
);

const VerticalScroll = () => (
  <div className="flex w-[25px] flex-col items-center border-l border-[#d9d9d9] bg-[#efefef]">
    <div className="flex w-[18px] flex-1 flex-col items-center rounded-full bg-[#f5f5f5] pb-[3px] pt-[6px]">
      <Svg w={12} h={10}>
        <path d="M6 1 11 9H1z" fill="#6e6e6e" stroke="#6e6e6e" strokeLinejoin="round" />
      </Svg>
      <span className="mt-[5px] h-6 w-[11px] rounded-full bg-[#707070]" />
      <Svg w={12} h={10} className="mt-auto">
        <path d="M6 9 11 1H1z" fill="#6e6e6e" stroke="#6e6e6e" strokeLinejoin="round" />
      </Svg>
    </div>
  </div>
);

const SheetTabs = () => (
  <div className="flex h-10 shrink-0 items-start border-t border-[#d9d9d9] bg-[#efefef]">
    <button aria-label="Previous sheet" className="ml-8 mt-3">
      <Svg w={8} h={14}>
        <path d="M7 1 1 7l6 6" stroke="#999" />
      </Svg>
    </button>
    <button aria-label="Next sheet" className="ml-8 mt-3">
      <Svg w={8} h={14}>
        <path d="m1 1 6 6-6 6" stroke="#999" />
      </Svg>
    </button>
    <button className="-mt-px ml-[60px] flex h-9 w-[192px] justify-center rounded-b-md border border-t-0 border-[#d9d9d9] bg-white">
      <span className="h-8 border-b-2 border-[#107c41] text-[18px] font-bold leading-8">รายงานบันทึกรายจ่าย</span>
    </button>
    <span className="ml-1 mt-2 h-6 w-px bg-[#d1d1d1]" />
    <button aria-label="New sheet" className="ml-[52px] mt-[11px]">
      <Svg w={15} h={15}>
        <path d="M7.500 0v15M0 7.500h15" stroke="#333" strokeWidth="1.500" />
      </Svg>
    </button>
    <Svg w={4} h={14} className="ml-auto mt-[13px]">
      <path d="M2 0v14" stroke="#444" strokeWidth="3" strokeDasharray="3 2.500" />
    </Svg>
    <div className="ml-[18px] mr-6 mt-2 flex h-[22px] w-[720px] items-center rounded-full bg-[#f5f5f5] pl-[6px] pr-1">
      <Svg w={10} h={12}>
        <path d="M1 6 9 1v10z" fill="#6e6e6e" stroke="#6e6e6e" strokeLinejoin="round" />
      </Svg>
      <span className="ml-[6px] h-[11px] w-[259px] rounded-full bg-[#707070]" />
      <Svg w={10} h={12} className="ml-auto">
        <path d="M9 6 1 1v10z" fill="#6e6e6e" stroke="#6e6e6e" strokeLinejoin="round" />
      </Svg>
    </div>
  </div>
);

const StatusBar = () => (
  <footer className="flex h-[26px] shrink-0 items-center border-t border-white bg-[#f5f5f5] pl-[9px] pr-[10px] text-xs text-[#333]">
    <span>Ready</span>
    <button className="ml-[26px] flex items-center gap-1">
      <Svg w={18} h={18}>
        <circle cx="8" cy="3" r="2" />
        <path d="M1 3c-1 2 1 3 5 4v4l-3 5 2 1 3-5 1 1M15 3c1 2-1 3-5 4v3M11 11l6 6M17 11l-6 6" />
      </Svg>
      Accessibility: Investigate
    </button>
    <button aria-label="Normal view" className="ml-auto flex h-[25px] w-[50px] items-center justify-center bg-[#e1e1e1]">
      <Svg w={18} h={17}>
        <path d="M1 1h16v15H1zM1 6h16M1 11h16M6.500 1v15M11.500 1v15" stroke="#333" />
      </Svg>
    </button>
    <button aria-label="Page Layout view" className="flex h-[25px] w-[50px] items-center justify-center">
      <Svg w={18} h={17}>
        <path d="M1 1h16v15H1zM4.500 3.500h9v10h-9zM6.500 6h5M6.500 8.500h5M6.500 11h5" stroke="#333" />
      </Svg>
    </button>
    <button aria-label="Page Break preview" className="flex h-[25px] w-[50px] items-center justify-center">
      <Svg w={18} h={17}>
        <path d="M1 1h16v15H1zM1 10h11V1M6.500 1v9" stroke="#333" />
      </Svg>
    </button>
    <button aria-label="Zoom out" className="ml-[6px]">
      <Svg w={10} h={10}>
        <path d="M0 5h10" stroke="#333" />
      </Svg>
    </button>
    <input
      type="range"
      aria-label="Zoom"
      min="0"
      max="100"
      defaultValue="50"
      className="mx-[6px] h-px w-[126px] appearance-none bg-[#777] [&::-webkit-slider-thumb]:h-[14px] [&::-webkit-slider-thumb]:w-[6px] [&::-webkit-slider-thumb]:appearance-none [&::-webkit-slider-thumb]:bg-[#666]"
    />
    <button aria-label="Zoom in">
      <Svg w={10} h={10}>
        <path d="M0 5h10M5 0v10" stroke="#333" />
      </Svg>
    </button>
    <span className="ml-4">100%</span>
  </footer>
);

const DialogButton = ({ primary, className = "", children }) => (
  <button
    className={`h-[29px] w-28 rounded border bg-[#fdfdfd] text-xs ${
      primary ? "border-[#0067c0]" : "border-[#ccd0d6]"
    } ${className}`}
  >
    {children}
  </button>
);

const FindDialog = () => {
  const [query, setQuery] = useState("EXP-23070027");

  return (
    <div
      role="dialog"
      aria-label="Find and Replace"
      className="absolute left-[121px] top-[310px] flex h-[250px] w-[671px] flex-col border-4 border-[#ff0000] bg-[#efefef] text-xs text-black shadow-[0_14px_44px_rgba(0,0,0,0.45)]"
    >
      <div className="flex h-9 items-center bg-[#eff3f9] pl-[6px] text-sm">
        <span>Find and Replace</span>
        <Svg w={14} h={14} className="ml-auto">
          <path d="M1 6.500h12" stroke="#bbb" />
        </Svg>
        <button aria-label="Maximize" className="ml-[44px]">
          <Svg w={14} h={14}>
            <rect x="1.500" y="1.500" width="11" height="11" rx="1" stroke="#111" strokeWidth="1.500" />
          </Svg>
        </button>
        <button aria-label="Close" className="ml-[45px] mr-6">
          <Svg w={14} h={14}>
            <path d="m1 1 12 12M13 1 1 13" stroke="#111" />
          </Svg>
        </button>
      </div>
      <div role="tablist" className="mt-2 flex h-[29px] items-end pl-[6px]">
        <button role="tab" aria-selected="true" className="-mb-px h-[29px] w-[82px] border border-b-0 border-[#e3e3e3] bg-[#f9f9f9]">
          Fin<u>d</u>
        </button>
        <button role="tab" aria-selected="false" className="h-[26px] w-[78px] border border-b-0 border-l-0 border-[#e3e3e3] bg-[#f3f3f3]">
          Re<u>p</u>lace
        </button>
      </div>
      <div className="ml-[6px] mr-3 flex h-[124px] flex-col border border-[#e3e3e3] bg-[#f9f9f9] pl-[13px] pr-3 pt-3">
        <div className="flex items-center">
          <label htmlFor="find-what" className="w-[90px]">
            Fi<u>n</u>d what:
          </label>
          <div className="relative flex h-[26px] flex-1 border border-[#999] bg-white">
            <input
              id="find-what"
              value={query}
              onChange={(e) => setQuery(e.target.value)}
              className="min-w-0 flex-1 pl-1 outline-none"
            />
            <span className="absolute left-[86px] top-1 h-4 w-px bg-black" />
            <button aria-label="Recent searches" className="flex w-5 items-center justify-center border border-[#ccc]">
              <Svg w={10} h={7}>
                <path d="m1 1 4 4 4-4" stroke="#555" />
              </Svg>
            </button>
          </div>
        </div>
        <DialogButton className="ml-auto mt-[43px]">
          Op<u>t</u>ions &gt;&gt;
        </DialogButton>
      </div>
      <div className="mt-3 flex justify-end pr-[11px]">
        <DialogButton>
          F<u>i</u>nd All
        </DialogButton>
        <DialogButton primary className="ml-[15px]">
          <u>F</u>ind Next
        </DialogButton>
        <DialogButton className="ml-7">Close</DialogButton>
      </div>
    </div>
  );
};

const App = () => (
  <div className={`relative flex h-screen flex-col overflow-hidden bg-[#efefef] text-[#262626] ${UI}`}>
    <TitleBar />
    <MenuBar />
    <Ribbon />
    <FormulaBar />
    <main className="mt-2 flex min-h-0 flex-1">
      <Sheet />
      <VerticalScroll />
    </main>
    <SheetTabs />
    <StatusBar />

    <FindDialog />
    {/* Pointer from Find & Select to the dialog */}
    <svg width="840" height="110" viewBox="0 0 840 110" aria-hidden="true" className="pointer-events-none absolute left-[800px] top-[220px]">
      <path d="M832 7 18 99" stroke="#ff0000" strokeWidth="4" />
      <path d="M2 101 20 93l2 11z" fill="#ff0000" />
    </svg>
  </div>
);

export default App;
